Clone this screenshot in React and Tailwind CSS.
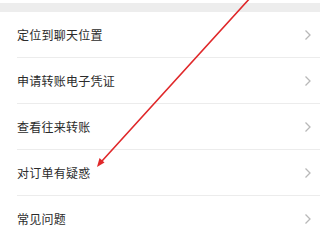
import React from 'react';

const items = ['定位到聊天位置', '申请转账电子凭证', '查看往来转账', '对订单有疑惑', '常见问题'];

const Chevron = () => (
  <svg width="8" height="12" viewBox="0 0 8 12" className="shrink-0">
    <path d="M1.5 1.5 L6 6 L1.5 10.5" fill="none" stroke="#b8b8b8" strokeWidth="1.3" />
  </svg>
);

export default function App() {
  return (
    <div
      className="relative w-[320px] h-[240px] overflow-hidden bg-white"
      style={{ fontFamily: '"Noto Sans CJK SC", "Noto Sans", sans-serif' }}
    >
      <div className="h-[3px] bg-white" />
      <div className="h-[9px] bg-[#ededed]" />
      <div className="flex flex-col">
        {items.map((label, i) => (
          <div key={label} className="pl-[17px]">
            <div
              className={`flex items-center justify-between h-[45px] pr-[8px] ${
                i < items.length - 1 ? 'border-b border-[#ececec]' : ''
              } box-content`}
            >
              <span className="text-[12px] tracking-[0.25px] text-[#2b2b2b]">{label}</span>
              <Chevron />
            </div>
          </div>
        ))}
      </div>

      {/* red annotation arrow */}
      <svg className="absolute inset-0 pointer-events-none" width="320" height="240" viewBox="0 0 320 240">
        <line x1="251" y1="-3" x2="102" y2="161" stroke="#e0282a" strokeWidth="1.6" strokeLinecap="round" />
        <polygon points="97,167 99.5,158 104.5,162.5" fill="#e0282a" />
      </svg>
    </div>
  );
}
